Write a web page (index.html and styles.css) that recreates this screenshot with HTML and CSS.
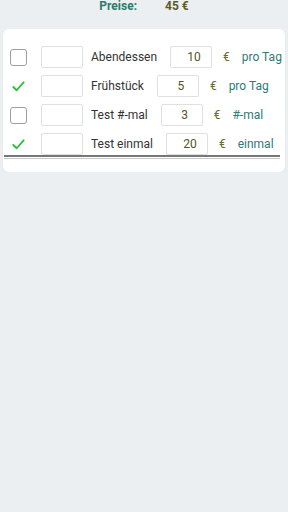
FILE: index.html
```html
<!DOCTYPE html>
<html lang="de">
<head>
    <meta charset="UTF-8">
    <meta name="viewport" content="width=device-width, initial-scale=1.0">
    <title>Preise</title>
    <link rel="stylesheet" href="styles.css">
</head>
<body>

<div class="summary">
    <span class="summary-label">Preise:</span>
    <span class="summary-value">45 €</span>
</div>

<div class="card">
    <div class="rows">
        <div class="row">
            <span class="check"></span>
            <span class="count"></span>
            <span class="name">Abendessen</span>
            <span class="price">10</span>
            <span class="euro">€</span>
            <span class="unit">pro Tag</span>
        </div>
        <div class="row">
            <span class="check checked">
                <svg viewBox="0 0 16 16" width="15" height="15"><path d="M2.5 8.5 L6 12 L13.5 3.5" fill="none" stroke="#2fbf3e" stroke-width="2" stroke-linecap="round" stroke-linejoin="round"/></svg>
            </span>
            <span class="count"></span>
            <span class="name">Frühstück</span>
            <span class="price">5</span>
            <span class="euro">€</span>
            <span class="unit">pro Tag</span>
        </div>
        <div class="row">
            <span class="check"></span>
            <span class="count"></span>
            <span class="name">Test #-mal</span>
            <span class="price">3</span>
            <span class="euro">€</span>
            <span class="unit">#-mal</span>
        </div>
        <div class="row">
            <span class="check checked">
                <svg viewBox="0 0 16 16" width="15" height="15"><path d="M2.5 8.5 L6 12 L13.5 3.5" fill="none" stroke="#2fbf3e" stroke-width="2" stroke-linecap="round" stroke-linejoin="round"/></svg>
            </span>
            <span class="count"></span>
            <span class="name">Test einmal</span>
            <span class="price">20</span>
            <span class="euro">€</span>
            <span class="unit">einmal</span>
        </div>
    </div>
    <div class="scrollbar"></div>
</div>

</body>
</html>
```

FILE: styles.css
```css
body {
    margin: 0;
    padding: 0;
    background: #eceff1;
    font-family: Roboto, "Liberation Sans", sans-serif;
    color: #333;
}

/* Total line */
.summary {
    display: flex;
    justify-content: center;
    gap: 28px;
    height: 29px;
    font-size: 12px;
    font-weight: bold;
    line-height: 13px;
}

.summary-label {
    color: #2a7a6c;
}

.summary-value {
    color: #5e5a22;
}

/* Card with the rows */
.card {
    margin: 0 3px;
    background: #fff;
    border-radius: 6px;
    padding: 17px 0 13px;
    box-shadow: 0 1px 2px rgba(0, 0, 0, 0.05);
}

.rows {
    display: flex;
    flex-direction: column;
    gap: 7px;
}

.row {
    display: flex;
    align-items: center;
    height: 22px;
    font-size: 12px;
    white-space: nowrap;
}

.row > * {
    flex-shrink: 0;
}

.check {
    width: 15px;
    height: 15px;
    margin-left: 7px;
    border: 1px solid #9e9e9e;
    border-radius: 3px;
    display: flex;
    align-items: center;
    justify-content: center;
}

.check.checked {
    border-color: transparent;
}

.count {
    width: 40px;
    height: 20px;
    margin-left: 14px;
    border: 1px solid #e0e0e0;
    border-radius: 2px;
}

.name {
    margin-left: 8px;
    color: #333;
}

.price {
    width: 34px;
    height: 20px;
    margin-left: 13px;
    padding-left: 6px;
    line-height: 20px;
    text-align: center;
    border: 1px solid #e0e0e0;
    border-radius: 2px;
    color: #55521e;
}

.euro {
    margin-left: 11px;
    color: #6b6830;
}

.unit {
    margin-left: 12px;
    color: #2f7a78;
}

.scrollbar {
    margin: 0 5px 0 1px;
    height: 1px;
    border-top: 2px solid #777;
    border-bottom: 1px solid #c8c8c8;
}
```
